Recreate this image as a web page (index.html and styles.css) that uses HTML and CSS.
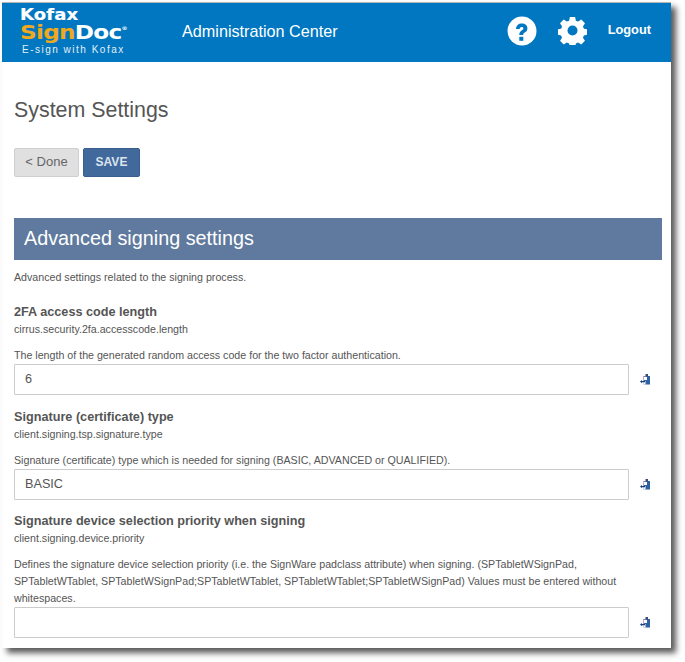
FILE: index.html
```html
<!DOCTYPE html>
<html lang="en">
<head>
  <meta charset="UTF-8">
  <meta name="viewport" content="width=device-width, initial-scale=1.0">
  <title>System Settings</title>
  <link rel="stylesheet" href="styles.css">
</head>
<body>
  <svg class="icon-defs" width="0" height="0">
    <symbol id="paste" viewBox="0 0 11 11">
      <rect x="3.500" y="2" width="6.500" height="8.500" fill="#2f62a5"/>
      <rect x="3" y="2.500" width="3.500" height="3.500" fill="#c9a6c8"/>
      <rect x="4" y="3" width="3" height="3" fill="#fff"/>
      <rect x="5.500" y="0" width="2.500" height="2.500" fill="#3b4a78"/>
      <rect x="3.500" y="7" width="2" height="3.500" fill="#fff"/>
      <path d="M0 7.500l2-1.500v1h3v1.200h-3v1z" fill="#1d3f7a"/>
    </symbol>
  </svg>
  <div class="window">
    <header class="topbar">
      <div class="logo">
        <div class="logo-kofax">Kofax</div>
        <div class="logo-signdoc"><span class="logo-sign">Sign</span>Doc<sup class="logo-reg">®</sup></div>
        <div class="logo-tag">E-sign with Kofax</div>
      </div>
      <div class="app-title">Administration Center</div>
      <div class="topbar-actions">
        <svg class="help-icon" viewBox="0 0 30 30" width="30" height="30">
          <circle cx="15" cy="15" r="14.500" fill="#fff"/>
          <path d="M9 13c.2-3.500 2.500-5.400 5.800-5.400 3.200 0 5.600 1.900 5.600 4.800 0 2-1 3.100-2.600 4.200-1.200.8-1.600 1.300-1.600 2.500h-3.900c-.1-2.300.6-3.400 2.300-4.600 1.200-.8 1.800-1.300 1.800-2.100 0-.9-.7-1.500-1.700-1.500-1.200 0-1.900.7-2 2.100z" fill="#0077c0"/>
          <rect x="12.300" y="20.800" width="4" height="4" fill="#0077c0"/>
        </svg>
        <svg class="gear-icon" viewBox="0 0 30 30" width="29" height="29">
          <path fill="#fff" fill-rule="evenodd" d="M12.300 1h5.400l.8 3.800 2.300 1 3.300-2.100 3.800 3.800-2.100 3.300 1 2.300 3.800.8v5.400l-3.800.8-1 2.300 2.100 3.300-3.800 3.800-3.300-2.100-2.300 1-.8 3.800h-5.400l-.8-3.800-2.300-1-3.300 2.100-3.800-3.800 2.100-3.300-1-2.300-3.800-.8v-5.400l3.800-.8 1-2.300-2.100-3.300 3.800-3.800 3.300 2.100 2.300-1zM15 9.800a5.200 5.200 0 1 0 0 10.400 5.200 5.200 0 0 0 0-10.400z"/>
        </svg>
        <a class="logout">Logout</a>
      </div>
    </header>

    <main class="content">
      <h1 class="page-title">System Settings</h1>
      <div class="page-buttons">
        <button class="btn btn-done">&lt; Done</button>
        <button class="btn btn-save">SAVE</button>
      </div>

      <h2 class="section-title">Advanced signing settings</h2>
      <p class="section-desc">Advanced settings related to the signing process.</p>

      <div class="setting">
        <div class="setting-name">2FA access code length</div>
        <div class="setting-key">cirrus.security.2fa.accesscode.length</div>
        <p class="setting-desc">The length of the generated random access code for the two factor authentication.</p>
        <div class="setting-row">
          <input class="setting-input" type="text" value="6">
          <svg class="paste-icon" width="11" height="11"><use href="#paste"/></svg>
        </div>
      </div>

      <div class="setting">
        <div class="setting-name">Signature (certificate) type</div>
        <div class="setting-key">client.signing.tsp.signature.type</div>
        <p class="setting-desc">Signature (certificate) type which is needed for signing (BASIC, ADVANCED or QUALIFIED).</p>
        <div class="setting-row">
          <input class="setting-input" type="text" value="BASIC">
          <svg class="paste-icon" width="11" height="11"><use href="#paste"/></svg>
        </div>
      </div>

      <div class="setting">
        <div class="setting-name">Signature device selection priority when signing</div>
        <div class="setting-key">client.signing.device.priority</div>
        <p class="setting-desc">Defines the signature device selection priority (i.e. the SignWare padclass attribute) when signing. (SPTabletWSignPad, SPTabletWTablet, SPTabletWSignPad;SPTabletWTablet, SPTabletWTablet;SPTabletWSignPad) Values must be entered without whitespaces.</p>
        <div class="setting-row">
          <input class="setting-input" type="text" value="">
          <svg class="paste-icon" width="11" height="11"><use href="#paste"/></svg>
        </div>
      </div>
    </main>
  </div>
</body>
</html>
```

FILE: styles.css
```css
html, body {
  margin: 0;
  background: #fff;
  overflow: hidden;
}

body {
  height: 662px;
  font-family: "Liberation Sans", Arial, sans-serif;
  color: #555;
}

.icon-defs {
  display: block;
  height: 0;
}

.window {
  margin: 2px 0 0 2px;
  width: 669px;
  height: 646px;
  background: #fff;
  border-top: 1px solid #b5b5b5;
  box-sizing: border-box;
  box-shadow: 5px 5px 6px rgba(0, 0, 0, 0.65);
  overflow: hidden;
}

.topbar {
  height: 59px;
  background: #0077c0;
  display: flex;
  align-items: center;
  color: #fff;
}

.logo {
  margin-left: 18px;
  width: 160px;
  height: 59px;
  padding-top: 3px;
  box-sizing: border-box;
}

.logo-kofax {
  font-family: "DejaVu Sans", sans-serif;
  font-weight: bold;
  font-size: 15px;
  line-height: 18px;
  letter-spacing: 0.1px;
  color: #fff;
  transform: scaleX(1.2);
  transform-origin: left;
  -webkit-text-stroke: 0.2px #fff;
}

.logo-signdoc {
  font-family: "DejaVu Sans", sans-serif;
  font-weight: bold;
  font-size: 19px;
  line-height: 16px;
  letter-spacing: -0.6px;
  color: #fff;
  transform: scaleX(1.22);
  transform-origin: left;
}

.logo-sign {
  color: #f0a81c;
}

.logo-reg {
  font-size: 5px;
  line-height: 0;
  vertical-align: 9px;
}

.logo-tag {
  margin: 4px 0 0 2px;
  font-size: 10px;
  line-height: 12px;
  letter-spacing: 1.5px;
  color: #e4eef6;
}

.app-title {
  margin: -3px 0 0 2px;
  font-size: 16.2px;
  color: #fff;
}

.topbar-actions {
  margin-left: auto;
  display: flex;
  align-items: center;
  margin-top: -4px;
}

.help-icon {
  margin-right: 21px;
}

.gear-icon {
  margin-right: 21px;
}

.logout {
  margin-right: 20px;
  margin-top: -3px;
  font-size: 12.8px;
  font-weight: bold;
  color: #fff;
}

.content {
  padding: 0 9px 0 12px;
}

.page-title {
  margin: 35px 0 0;
  font-size: 21.4px;
  font-weight: normal;
  line-height: 26px;
  color: #555;
}

.page-buttons {
  margin-top: 25px;
  display: flex;
  gap: 4px;
}

.btn {
  height: 29px;
  padding: 0 0 2px;
  border-radius: 2px;
  font-family: inherit;
  font-size: 12px;
  line-height: 24px;
  box-sizing: border-box;
}

.btn-done {
  width: 65px;
  font-size: 13px;
  background: #e0e0e0;
  border: 1px solid #cfcfcf;
  color: #666;
}

.btn-save {
  width: 57px;
  background: #41699b;
  border: 1px solid #3a5f8e;
  color: #dde4ee;
  font-weight: bold;
}

.section-title {
  margin: 41px 0 0;
  height: 42px;
  padding-left: 10px;
  background: #5f7a9e;
  color: #fff;
  font-size: 19.8px;
  font-weight: normal;
  line-height: 40px;
}

.section-desc {
  margin: 10px 0 0;
  font-size: 10.66px;
  line-height: 14px;
  color: #555;
}

.setting {
  font-size: 10.66px;
}

.setting-name {
  margin-top: 14px;
  font-size: 12.66px;
  font-weight: bold;
  line-height: 16px;
  color: #555;
}

.section-desc + .setting .setting-name {
  margin-top: 20px;
}

.setting:last-child .setting-name {
  margin-top: 13px;
}

.setting-key {
  margin-top: 2px;
  line-height: 14px;
  color: #555;
}

.setting-desc {
  margin: 11px 0 0;
  line-height: 17px;
  color: #555;
}

.setting-row {
  display: flex;
  align-items: center;
}

.setting-input {
  width: 615px;
  height: 31px;
  padding: 0 10px 2px;
  border: 1px solid #ccc;
  border-radius: 1px;
  box-sizing: border-box;
  font-family: inherit;
  font-size: 12.66px;
  color: #555;
  background: #fff;
}

.paste-icon {
  margin-left: 11px;
}
```
